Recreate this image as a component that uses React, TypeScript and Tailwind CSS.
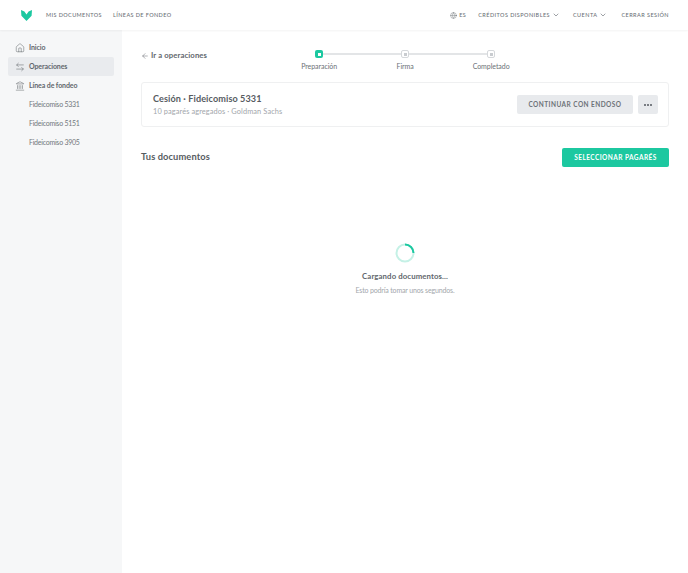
import React from "react";
import { Home, ArrowLeftRight, Landmark, ArrowLeft, Globe, ChevronDown } from "lucide-react";

function Step({ label, active }: { label: string; active?: boolean }) {
  return (
    <div className="relative z-10 flex w-[8px] flex-col items-center">
      <div className={active ? "flex h-[8px] w-[8px] items-center justify-center rounded-[2px] bg-[#1cc8a0]" : "flex h-[8px] w-[8px] items-center justify-center rounded-[2px] border border-[#d5d8db] bg-white"}>
        <div className={active ? "h-[3px] w-[3px] bg-white" : "h-[3px] w-[3px] bg-[#c9ccd0]"} />
      </div>
      <span className="mt-[3px] whitespace-nowrap text-[7px] leading-[10px] tracking-[-0.05px] text-[#6c7177]">{label}</span>
    </div>
  );
}

function NavItem({ icon, label, active }: { icon: React.ReactNode; label: string; active?: boolean }) {
  return (
    <div className={active ? "flex h-[19px] items-center rounded-[2px] bg-[#e9ebee] pl-[7px]" : "flex h-[19px] items-center pl-[7px]"}>
      <span className="flex w-[10px] justify-center text-[#5f6469]">{icon}</span>
      <span className="ml-[4px] text-[7px] font-bold tracking-[-0.1px] text-[#62676d]">{label}</span>
    </div>
  );
}

export default function App() {
  return (
    <div className="flex h-[573px] w-[688px] flex-col overflow-hidden bg-white font-['Lato',sans-serif]">
      <header className="relative z-10 flex h-[30px] shrink-0 items-center bg-white pl-[21px] pr-[19px] shadow-[0_1px_2px_rgba(0,0,0,0.05)]">
        <svg width="11" height="11" viewBox="0 0 11 11">
          <path d="M0 0 L3.4 1.4 L5.5 4.6 L7.6 1.4 L11 0 L10.6 5.8 L5.5 11 L0.4 5.8 Z" fill="#1cc8a0" />
        </svg>
        <nav className="ml-[14px] flex gap-[11px] text-[5.5px] font-medium tracking-[0.4px] text-[#6d7278]">
          <span>MIS DOCUMENTOS</span>
          <span>LÍNEAS DE FONDEO</span>
        </nav>
        <div className="ml-auto flex items-center text-[5.5px] font-medium tracking-[0.45px] text-[#6d7278]">
          <Globe size={7} strokeWidth={1.5} />
          <span className="ml-[2px]">ES</span>
          <span className="ml-[12px]">CRÉDITOS DISPONIBLES</span>
          <ChevronDown size={8} strokeWidth={2} className="ml-[2px]" />
          <span className="ml-[13px]">CUENTA</span>
          <ChevronDown size={8} strokeWidth={2} className="ml-[2px]" />
          <span className="ml-[14px]">CERRAR SESIÓN</span>
        </div>
      </header>
      <div className="flex min-h-0 flex-1">
        <aside className="flex w-[122px] shrink-0 flex-col bg-[#f6f7f8] px-[8px] pt-[8px]">
          <NavItem icon={<Home size={10} strokeWidth={1.25} />} label="Inicio" />
          <NavItem icon={<ArrowLeftRight size={10} strokeWidth={1.25} />} label="Operaciones" active />
          <NavItem icon={<Landmark size={10} strokeWidth={1.25} />} label="Línea de fondeo" />
          {["Fideicomiso 5331", "Fideicomiso 5151", "Fideicomiso 3905"].map((t) => (
            <div key={t} className="flex h-[19px] items-center pl-[21px] text-[7px] tracking-[-0.25px] text-[#72777d]">{t}</div>
          ))}
        </aside>
        <main className="min-w-0 flex-1 px-[19px]">
          <div className="relative flex h-[52px] items-start">
            <div className="mt-[20px] flex items-center text-[7.75px] font-bold tracking-[0.1px] text-[#62676d]">
              <ArrowLeft size={8} strokeWidth={1.5} />
              <span className="ml-[2px]">Ir a operaciones</span>
            </div>
            <div className="relative ml-[108px] mt-[20px] flex w-[180px] justify-between">
              <div className="absolute left-[4px] right-[4px] top-[3px] h-[1.5px] bg-[#e3e5e7]" />
              <Step label="Preparación" active />
              <Step label="Firma" />
              <Step label="Completado" />
            </div>
          </div>
          <section className="flex h-[45px] items-center justify-between rounded-[3px] border border-[#eff0f1] bg-white pl-[11px] pr-[10px]">
            <div>
              <div className="text-[9.1px] font-bold leading-[14px] tracking-[0.1px] text-[#565b61]">Cesión · Fideicomiso 5331</div>
              <div className="text-[7.4px] leading-[12px] tracking-[0.1px] text-[#a2a6ab]">10 pagarés agregados · Goldman Sachs</div>
            </div>
            <div className="flex items-center gap-[5px]">
              <button className="h-[19px] w-[116px] rounded-[2px] bg-[#e8eaed] text-[6.5px] font-bold tracking-[0.45px] text-[#6d7278]">CONTINUAR CON ENDOSO</button>
              <button className="flex h-[19px] w-[20px] items-center justify-center gap-[1px] rounded-[2px] bg-[#e8eaed]">
                <i className="h-[2px] w-[2px] rounded-full bg-[#55595f]" />
                <i className="h-[2px] w-[2px] rounded-full bg-[#55595f]" />
                <i className="h-[2px] w-[2px] rounded-full bg-[#55595f]" />
              </button>
            </div>
          </section>
          <div className="mt-[21px] flex h-[19px] items-center justify-between">
            <h2 className="mb-[2px] text-[9.3px] font-bold tracking-[0.1px] text-[#565b61]">Tus documentos</h2>
            <button className="h-[19px] w-[107px] rounded-[2px] bg-[#1cc8a0] text-[6.5px] font-bold tracking-[0.45px] text-white">SELECCIONAR PAGARÉS</button>
          </div>
          <div className="mt-[76px] flex flex-col items-center">
            <svg width="20" height="20" viewBox="0 0 20 20">
              <circle cx="10" cy="10" r="8.5" fill="none" stroke="#c5f1e6" strokeWidth="2" />
              <path d="M10 1.5 A8.5 8.5 0 0 1 18.5 10" fill="none" stroke="#1cc8a0" strokeWidth="2" />
            </svg>
            <div className="mt-[8px] text-[7.8px] font-bold leading-[11px] tracking-[0.1px] text-[#62676d]">Cargando documentos...</div>
            <div className="mt-[3px] text-[7px] leading-[10px] tracking-[-0.15px] text-[#a2a6ab]">Esto podría tomar unos segundos.</div>
          </div>
        </main>
      </div>
    </div>
  );
}
